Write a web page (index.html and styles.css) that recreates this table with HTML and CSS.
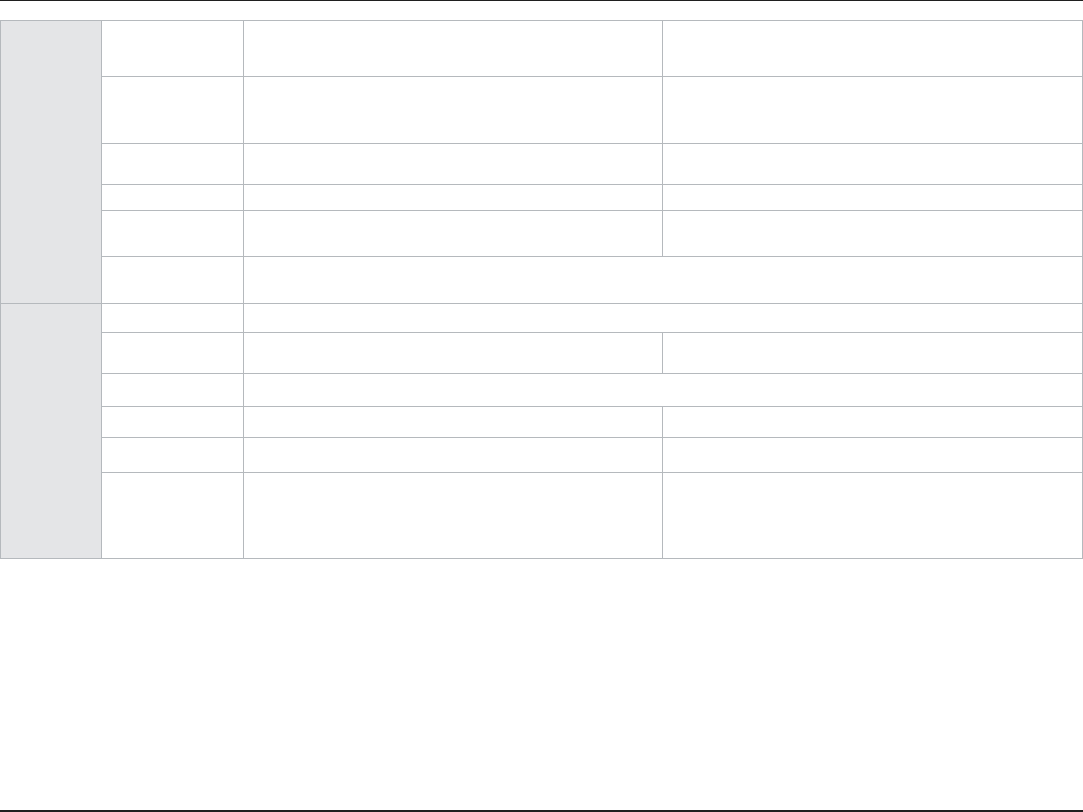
FILE: index.html
```html
<!DOCTYPE html>
<html lang="en">
<head>
<meta charset="utf-8">
<title>Table</title>
<link rel="stylesheet" href="styles.css">
</head>
<body>
<div class="page">
  <div class="topline"></div>
  <div class="grid">
    <div class="cell group g1"></div>
    <div class="cell r1"></div><div class="cell r1"></div><div class="cell r1"></div>
    <div class="cell"></div><div class="cell"></div><div class="cell"></div>
    <div class="cell"></div><div class="cell"></div><div class="cell"></div>
    <div class="cell"></div><div class="cell"></div><div class="cell"></div>
    <div class="cell"></div><div class="cell"></div><div class="cell"></div>
    <div class="cell"></div><div class="cell span"></div>
    <div class="cell group g2"></div>
    <div class="cell"></div><div class="cell span"></div>
    <div class="cell"></div><div class="cell"></div><div class="cell"></div>
    <div class="cell"></div><div class="cell span"></div>
    <div class="cell"></div><div class="cell"></div><div class="cell"></div>
    <div class="cell"></div><div class="cell"></div><div class="cell"></div>
    <div class="cell"></div><div class="cell"></div><div class="cell"></div>
  </div>
  <div class="spacer"></div>
  <div class="bottomline"></div>
</div>
</body>
</html>
```
FILE: styles.css
```css
html, body {
  margin: 0;
  padding: 0;
  background: #ffffff;
  font-family: "Liberation Sans", Arial, sans-serif;
}

.page {
  display: flex;
  flex-direction: column;
  height: 812px;
  width: 1083px;
}

.topline {
  height: 1px;
  background: #1f1f1f;
  flex: none;
  margin-bottom: 19px;
}

.grid {
  flex: none;
  display: grid;
  grid-template-columns: 100px 141px 418px 419px;
  grid-template-rows: 55px 66px 40px 25px 45px 46px 28px 40px 32px 30px 34px 85px;
  gap: 1px;
  padding: 1px;
  background: #b5b9bd;
  width: 1083px;
  box-sizing: border-box;
}

.cell {
  background: #ffffff;
}

.group {
  background: #e4e5e7;
}

.g1 {
  grid-column: 1;
  grid-row: 1 / span 6;
}

.g2 {
  grid-column: 1;
  grid-row: 7 / span 6;
}

.span {
  grid-column: 3 / span 2;
}

.spacer {
  flex: 1;
}

.bottomline {
  height: 2px;
  background: #1f1f1f;
  flex: none;
}
```
